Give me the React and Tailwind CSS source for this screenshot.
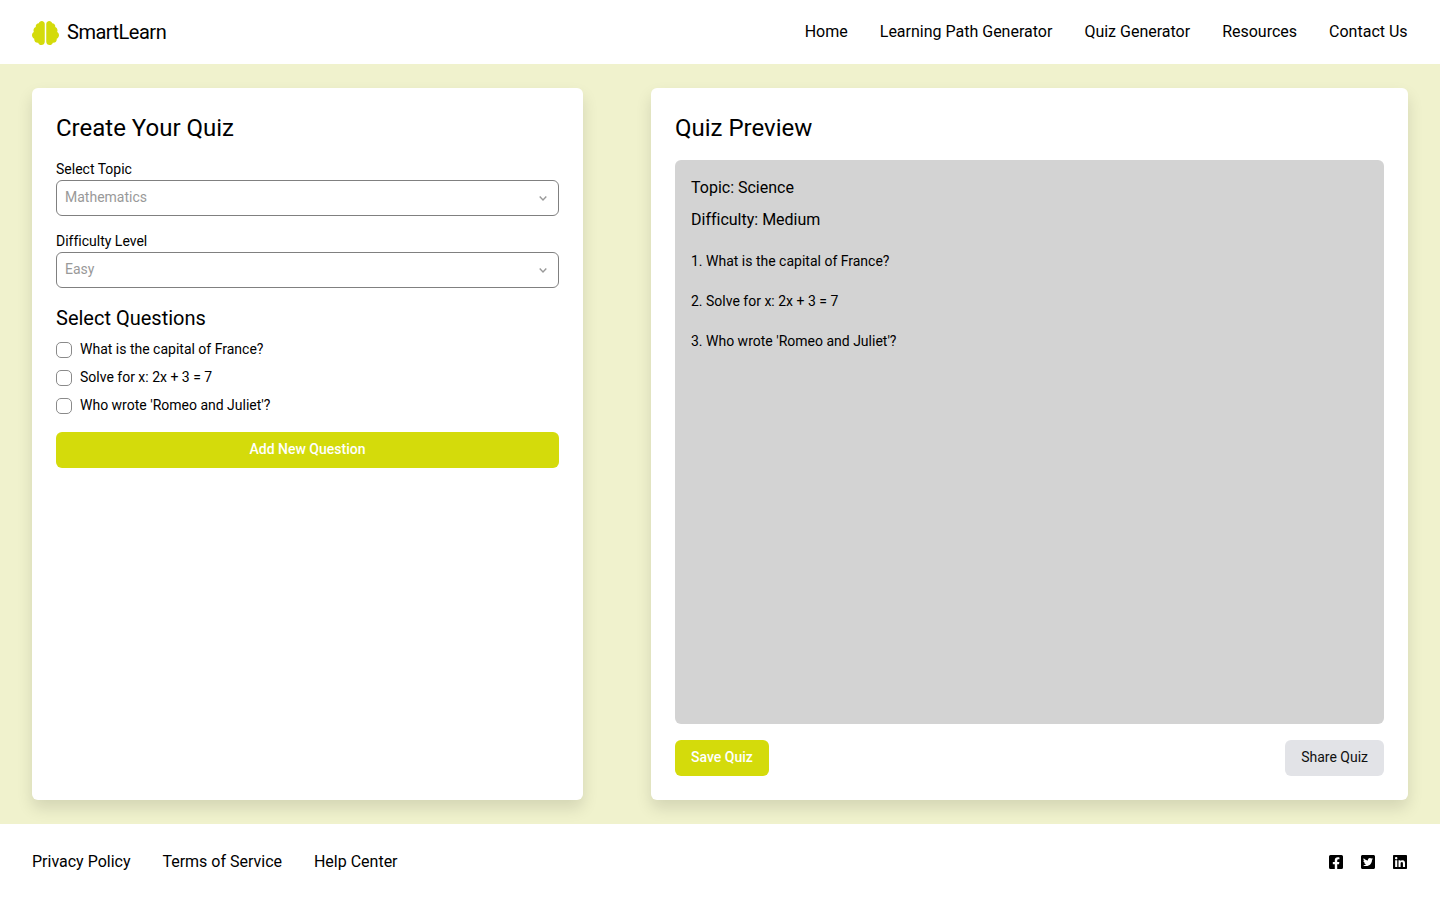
import { FaBrain, FaFacebookSquare, FaTwitterSquare, FaLinkedin } from "react-icons/fa";

const navLinks = ["Home", "Learning Path Generator", "Quiz Generator", "Resources", "Contact Us"];
const footerLinks = ["Privacy Policy", "Terms of Service", "Help Center"];
const questions = ["What is the capital of France?", "Solve for x: 2x + 3 = 7", "Who wrote 'Romeo and Juliet'?"];

function Chevron() {
  return (
    <svg viewBox="0 0 8 5" className="h-[5px] w-2 fill-none stroke-current" strokeWidth="1.4">
      <path d="M.7.6 4 3.9 7.3.6" />
    </svg>
  );
}

function SelectField({ label, value }) {
  return (
    <div className="mb-4">
      <label className="block h-5 text-sm leading-[18px]">{label}</label>
      <button
        type="button"
        className="flex h-9 w-full items-center justify-between rounded-md border border-[#808080] bg-white pl-2 pr-[11px] text-sm text-[#999]"
      >
        <span className="-mt-0.5">{value}</span>
        <Chevron />
      </button>
    </div>
  );
}

function QuizForm() {
  return (
    <section className="w-[551px] rounded-md bg-white p-6 shadow-[0_8px_16px_rgba(0,0,0,0.12)]">
      <h2 className="mb-4 text-2xl leading-8">Create Your Quiz</h2>
      <SelectField label="Select Topic" value="Mathematics" />
      <SelectField label="Difficulty Level" value="Easy" />
      <h3 className="mb-2 text-xl leading-7">Select Questions</h3>
      <ul className="mb-4 flex flex-col gap-2">
        {questions.map((question) => (
          <li key={question} className="flex h-5 items-center gap-2 text-sm">
            <input
              type="checkbox"
              aria-label={question}
              className="size-4 shrink-0 appearance-none rounded-[5px] border border-[#8a8a8a] bg-white"
            />
            <span className="-mt-0.5">{question}</span>
          </li>
        ))}
      </ul>
      <button type="button" className="h-9 w-full rounded-md bg-[#d4db0b] pb-0.5 text-sm font-medium text-white">
        Add New Question
      </button>
    </section>
  );
}

function QuizPreview() {
  return (
    <section className="flex w-[757px] flex-col rounded-md bg-white p-6 shadow-[0_8px_16px_rgba(0,0,0,0.12)]">
      <h2 className="mb-4 text-2xl leading-8">Quiz Preview</h2>
      <div className="mb-4 flex-1 rounded-md bg-[#d3d3d3] p-4">
        <p className="mb-2 leading-6">Topic: Science</p>
        <p className="mb-[19px] leading-6">Difficulty: Medium</p>
        <ol className="flex flex-col gap-5 text-sm">
          {questions.map((question, index) => (
            <li key={question} className="leading-5">
              {`${index + 1}. ${question}`}
            </li>
          ))}
        </ol>
      </div>
      <div className="flex justify-between text-sm">
        <button type="button" className="h-9 rounded-md bg-[#d4db0b] px-4 pb-0.5 font-medium text-white">
          Save Quiz
        </button>
        <button type="button" className="h-9 rounded-md bg-[#e2e3e7] px-4 pb-0.5 text-[#111]">
          Share Quiz
        </button>
      </div>
    </section>
  );
}

export default function App() {
  return (
    <div className="flex h-screen flex-col bg-white font-[Roboto,sans-serif] text-black [font-variant-ligatures:none]">
      <header className="flex h-16 items-center justify-between px-8">
        <div className="flex items-center gap-2">
          <FaBrain className="mt-px h-6 w-[27px] text-[#d4db0b]" />
          <span className="text-xl tracking-tight">SmartLearn</span>
        </div>
        <nav className="flex gap-8 pr-[0.4px]">
          {navLinks.map((link) => (
            <a key={link} href="#">
              {link}
            </a>
          ))}
        </nav>
      </header>
      <main className="flex h-[760px] justify-between bg-[#f0f2cd] px-8 py-6">
        <QuizForm />
        <QuizPreview />
      </main>
      <footer className="flex h-[76px] items-center justify-between px-8">
        <nav className="flex gap-[31.9px]">
          {footerLinks.map((link) => (
            <a key={link} href="#">
              {link}
            </a>
          ))}
        </nav>
        <div className="flex gap-4">
          <FaFacebookSquare />
          <FaTwitterSquare />
          <FaLinkedin />
        </div>
      </footer>
    </div>
  );
}
